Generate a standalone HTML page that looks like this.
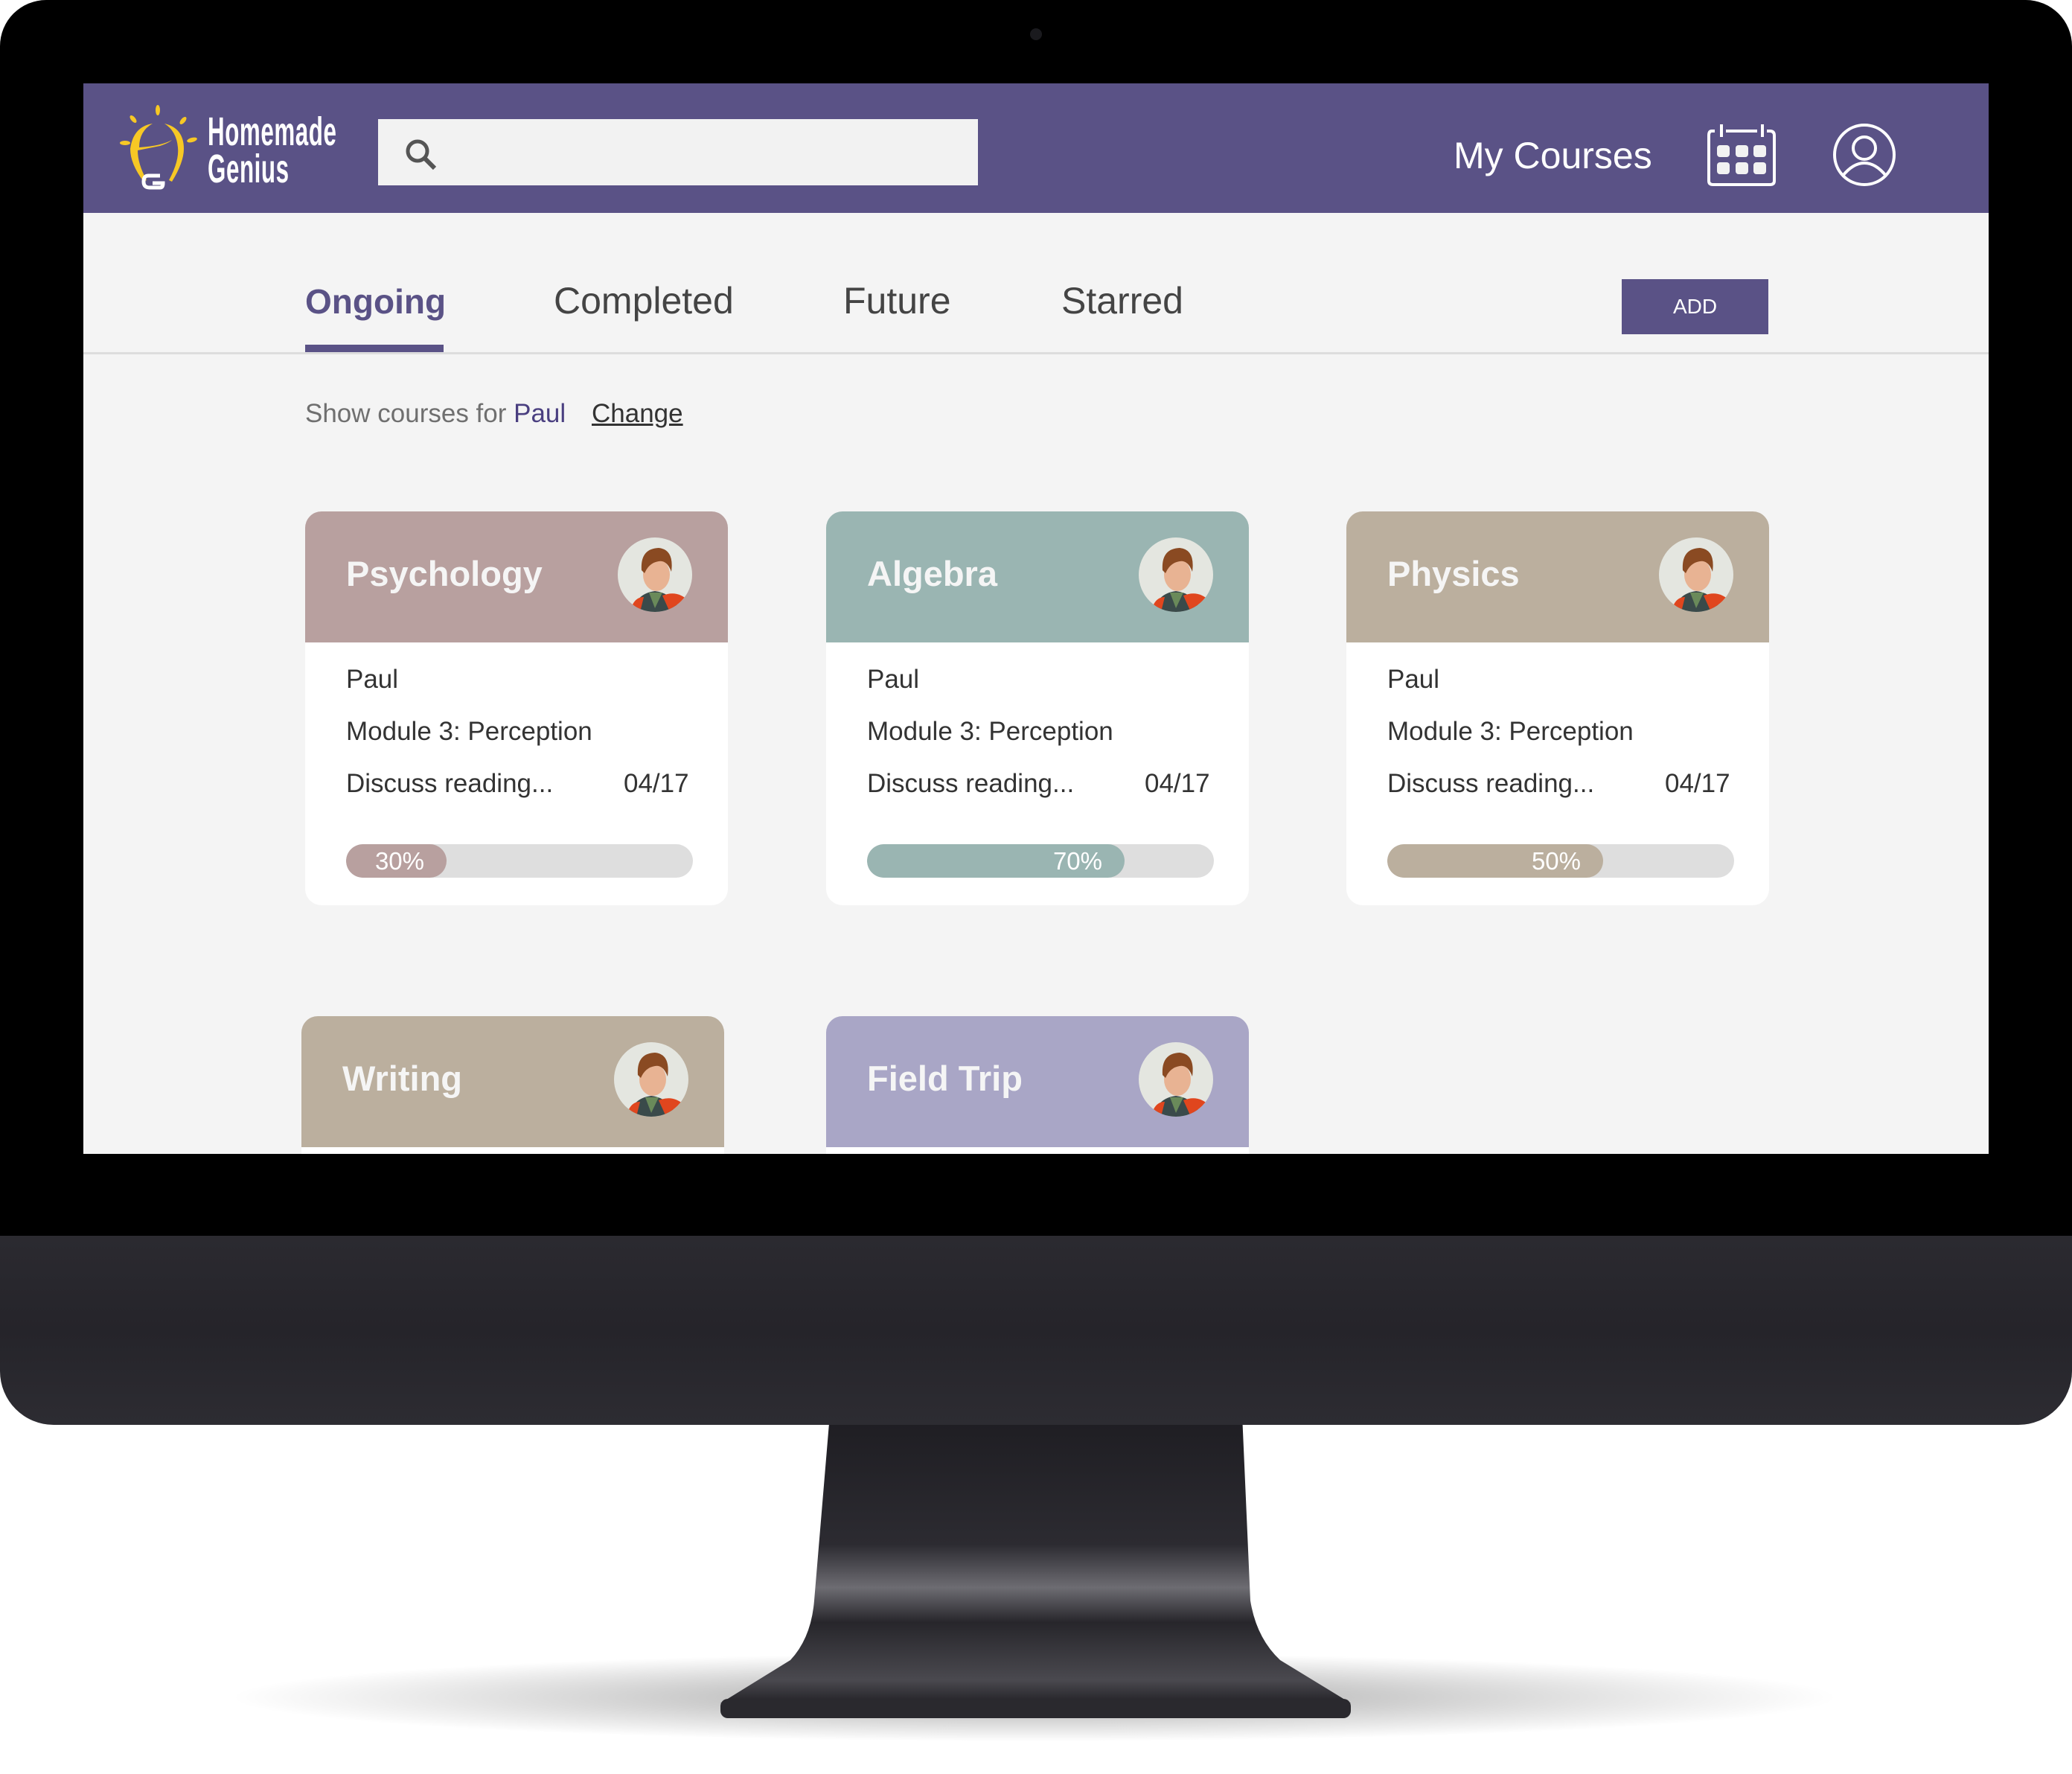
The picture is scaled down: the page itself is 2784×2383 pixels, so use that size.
<!DOCTYPE html>
<html><head><meta charset="utf-8"><style>
*{margin:0;padding:0;box-sizing:border-box}
body{width:2784px;height:2383px;background:#fff;position:relative;overflow:hidden;font-family:"Liberation Sans",sans-serif}
.a{position:absolute}
.card{position:absolute;width:568px;background:#fff;border-radius:22px;overflow:hidden}
.hd{height:176px;position:relative}
.hd .t{position:absolute;left:55px;top:56px;font-size:47px;font-weight:bold;color:#f5f5f5}
.hd svg{position:absolute;right:48px;top:35px}
.bd{position:relative;height:353px;color:#333;font-size:35px}
.bd div{position:absolute;left:55px}
.bar{position:absolute;left:55px;top:271px;width:466px;height:45px;border-radius:23px;background:#dedede;overflow:hidden}
.bar span{position:absolute;left:0;top:0;height:45px;border-radius:23px;color:#fff;font-size:33px;text-align:right;line-height:45px;padding-right:30px}
</style></head><body>
<div class="a" style="left:300px;top:2220px;width:2180px;height:120px;border-radius:50%;background:radial-gradient(ellipse at center,rgba(0,0,0,.35),rgba(0,0,0,0) 70%)"></div>
<svg class="a" style="left:0;top:1900px" width="2784" height="420">
<defs><linearGradient id="sg" x1="0" y1="0" x2="0" y2="1"><stop offset="0" stop-color="#1e1d22"/><stop offset=".45" stop-color="#2c2b31"/><stop offset=".6" stop-color="#6d6c72"/><stop offset=".72" stop-color="#27262b"/><stop offset=".92" stop-color="#4a494f"/><stop offset="1" stop-color="#232227"/></linearGradient></defs>
<path d="M1115 0 L1669 0 L1680 250 Q1688 300 1720 330 L1815 388 L968 388 L1062 330 Q1090 300 1094 250 Z" fill="url(#sg)"/>
<rect x="968" y="382" width="847" height="26" rx="10" fill="#2a292e"/>
</svg>
<div class="a" style="left:0;top:1600px;width:2784px;height:314px;background:linear-gradient(180deg,#2e2d33,#25242a 60%,#2d2c32);border-radius:0 0 72px 72px"></div>
<div class="a" style="left:0;top:0;width:2784px;height:1660px;background:#000;border-radius:62px 62px 0 0"></div>
<div class="a" style="left:1384px;top:38px;width:16px;height:16px;border-radius:50%;background:#1a1a1e"></div>
<div class="a" style="left:112px;top:112px;width:2560px;height:1438px;background:#f4f4f4;overflow:hidden">
 <div class="a" style="left:0;top:0;width:2560px;height:174px;background:#5a5286"></div>
 <svg class="a" style="left:45px;top:28px" width="120" height="118" viewBox="0 0 120 118">
  <g fill="#f7c825">
   <ellipse cx="55" cy="8" rx="3" ry="7"/><ellipse cx="22" cy="20" rx="3" ry="6" transform="rotate(-40 22 20)"/><ellipse cx="89" cy="22" rx="3" ry="6" transform="rotate(40 89 22)"/>
   <ellipse cx="11" cy="52" rx="7" ry="3"/><ellipse cx="101" cy="48" rx="7" ry="3" transform="rotate(-15 101 48)"/>
   <path d="M48 26 Q22 30 18 60 Q18 80 36 104 L40 102 Q28 80 28 62 L58 56 Q70 52 74 48 Q60 56 30 58 Q30 36 48 26 Z"/>
   <path d="M64 26 Q90 32 90 60 Q90 78 74 104 L70 102 Q84 76 82 58 Q80 36 64 26 Z"/>
  </g>
  <path d="M58 96 H42 Q36 96 36 104 Q36 112 44 112 H58 Q62 112 62 106 H48" fill="none" stroke="#fff" stroke-width="5"/>
 </svg>
 <div class="a" style="left:167px;top:40px;color:#fff;font-weight:bold;font-size:54px;line-height:50px;transform:scaleX(.58);transform-origin:left top;letter-spacing:1px">Homemade<br>Genius</div>
 <div class="a" style="left:396px;top:48px;width:806px;height:89px;background:#f2f2f2"></div>
 <svg class="a" style="left:430px;top:72px" width="50" height="50" viewBox="0 0 50 50"><circle cx="19" cy="19" r="13" fill="none" stroke="#555" stroke-width="5"/><path d="M29 29 L42 42" stroke="#555" stroke-width="6"/></svg>
 <div class="a" style="left:1841px;top:68px;color:#fff;font-size:50px">My Courses</div>
 <svg class="a" style="left:2180px;top:50px" width="100" height="92" viewBox="0 0 100 92">
  <path d="M12 14 H8 Q4 14 4 20 V81 Q4 86 10 86 H86 Q92 86 92 81 V20 Q92 14 86 14 H82 M27 14 H69" fill="none" stroke="#fff" stroke-width="4"/>
  <path d="M21 5 V22 M76 5 V22" stroke="#fff" stroke-width="4"/>
  <g fill="#f2f2f2"><rect x="15" y="33" width="17" height="16" rx="4"/><rect x="40" y="33" width="17" height="16" rx="4"/><rect x="64" y="33" width="17" height="16" rx="4"/><rect x="15" y="56" width="17" height="16" rx="4"/><rect x="40" y="56" width="17" height="16" rx="4"/><rect x="64" y="56" width="17" height="16" rx="4"/></g>
 </svg>
 <svg class="a" style="left:2348px;top:51px" width="90" height="90" viewBox="0 0 90 90"><circle cx="45" cy="45" r="40" fill="none" stroke="#fff" stroke-width="4"/><circle cx="45" cy="36" r="15" fill="none" stroke="#fff" stroke-width="4"/><path d="M16 73 Q30 56 45 56 Q60 56 74 73" fill="none" stroke="#fff" stroke-width="4"/></svg>
 <div class="a" style="left:298px;top:266px;font-size:46px;font-weight:bold;color:#5a5286">Ongoing</div>
 <div class="a" style="left:298px;top:351px;width:186px;height:10px;background:#5a5286"></div>
 <div class="a" style="left:632px;top:263px;font-size:50px;color:#444">Completed</div>
 <div class="a" style="left:1021px;top:263px;font-size:50px;color:#444">Future</div>
 <div class="a" style="left:1314px;top:263px;font-size:50px;color:#444">Starred</div>
 <div class="a" style="left:2067px;top:263px;width:197px;height:74px;background:#5a5286;color:#fff;font-size:28px;text-align:center;line-height:74px">ADD</div>
 <div class="a" style="left:0;top:361px;width:2560px;height:3px;background:#dddddd"></div>
 <div class="a" style="left:298px;top:424px;font-size:35px;color:#6f6f6f">Show courses for <span style="color:#4a3f80">Paul</span></div>
 <div class="a" style="left:683px;top:424px;font-size:35px;color:#333;text-decoration:underline">Change</div>
</div>
<svg width="0" height="0" style="position:absolute"><defs>
<symbol id="av" viewBox="0 0 100 100">
<clipPath id="cc"><circle cx="50" cy="50" r="50"/></clipPath>
<g clip-path="url(#cc)"><rect width="100" height="100" fill="#e4e6e0"/>
<path d="M20 100 Q25 75 50 72 Q75 75 85 100 Z" fill="#3a4a4a"/>
<path d="M60 78 Q80 70 95 85 L100 100 H70 Z" fill="#e0461e"/><path d="M20 90 Q25 80 35 80 L30 100 H18 Z" fill="#e0461e"/>
<path d="M42 74 L50 95 L60 74 Z" fill="#6a8a5a"/>
<ellipse cx="52" cy="50" rx="18" ry="22" fill="#e8b393"/>
<path d="M32 44 Q30 15 55 14 Q76 16 72 46 Q66 30 55 32 Q42 34 36 48 Z" fill="#8a4a22"/></g>
</symbol></defs></svg>
<div class="card" style="left:410px;top:687px;height:529px"><div class="hd" style="background:#b8a09f"><div class="t">Psychology</div><svg width="100" height="100"><use href="#av"/></svg></div>
<div class="bd"><div style="top:30px">Paul</div><div style="top:100px">Module 3: Perception</div><div style="top:170px">Discuss reading...</div><div style="top:170px;left:428px">04/17</div><div class="bar"><span style="width:135px;background:#b8a09f">30%</span></div></div></div>
<div class="card" style="left:1110px;top:687px;height:529px"><div class="hd" style="background:#9ab5b2"><div class="t">Algebra</div><svg width="100" height="100"><use href="#av"/></svg></div>
<div class="bd"><div style="top:30px">Paul</div><div style="top:100px">Module 3: Perception</div><div style="top:170px">Discuss reading...</div><div style="top:170px;left:428px">04/17</div><div class="bar"><span style="width:346px;background:#9ab5b2">70%</span></div></div></div>
<div class="card" style="left:1809px;top:687px;height:529px"><div class="hd" style="background:#bbaf9e"><div class="t">Physics</div><svg width="100" height="100"><use href="#av"/></svg></div>
<div class="bd"><div style="top:30px">Paul</div><div style="top:100px">Module 3: Perception</div><div style="top:170px">Discuss reading...</div><div style="top:170px;left:428px">04/17</div><div class="bar"><span style="width:290px;background:#bbaf9e">50%</span></div></div></div>
<div class="card" style="left:405px;top:1365px;height:185px;border-radius:22px 22px 0 0"><div class="hd" style="background:#bbaf9e"><div class="t">Writing</div><svg width="100" height="100"><use href="#av"/></svg></div></div>
<div class="card" style="left:1110px;top:1365px;height:185px;border-radius:22px 22px 0 0"><div class="hd" style="background:#a9a6c6"><div class="t">Field Trip</div><svg width="100" height="100"><use href="#av"/></svg></div></div>
</body></html>
